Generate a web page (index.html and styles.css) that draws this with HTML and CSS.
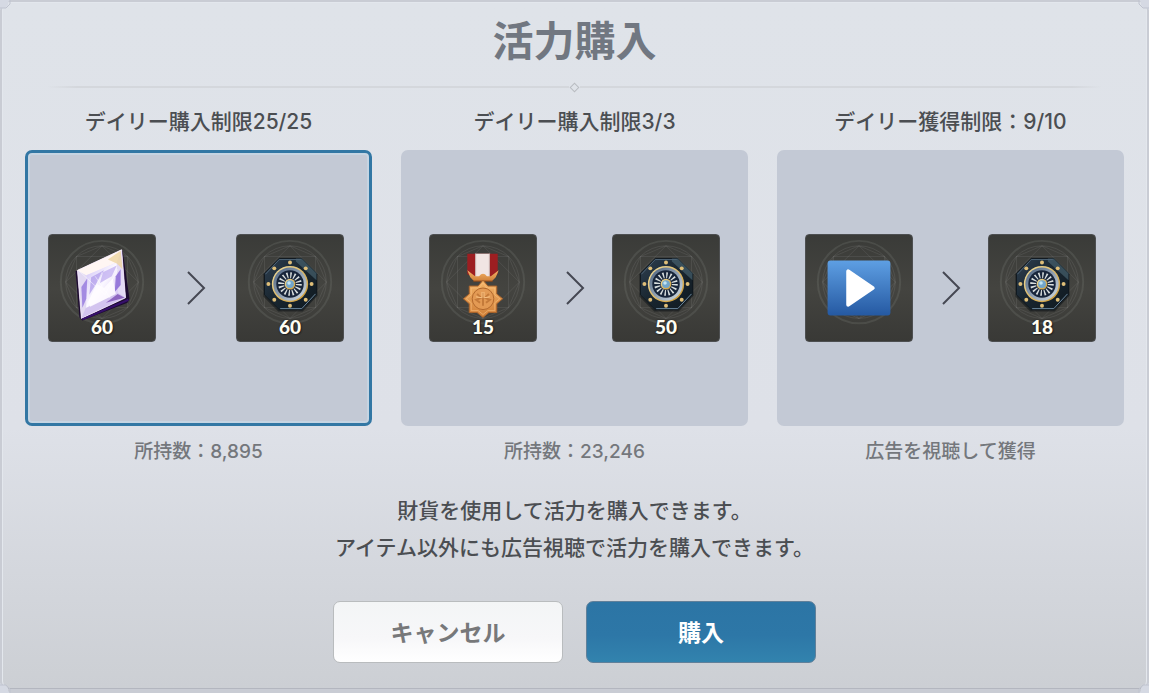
FILE: index.html
```html
<!doctype html>
<html lang="ja">
  <head>
    <meta charset="UTF-8" />
    <meta name="viewport" content="width=device-width, initial-scale=1" />
    <title>活力購入</title>
    <link rel="stylesheet" href="styles.css">
  </head>
  <body>
    <!-- shared drawings -->
    <svg class="sprite" width="0" height="0" aria-hidden="true">
      <defs>
        <linearGradient id="octagon-fill" x1="0" y1="0" x2="1" y2="1">
          <stop offset="0" stop-color="#2f4051" />
          <stop offset="0.45" stop-color="#1a2731" />
          <stop offset="1" stop-color="#0f1920" />
        </linearGradient>
        <linearGradient id="gold" x1="0" y1="0" x2="1" y2="1">
          <stop offset="0" stop-color="#f1dfa2" />
          <stop offset="1" stop-color="#c9952f" />
        </linearGradient>
        <linearGradient id="silver" x1="0" y1="0" x2="1" y2="1">
          <stop offset="0" stop-color="#4a607d" />
          <stop offset="1" stop-color="#d3dde5" />
        </linearGradient>
        <linearGradient id="gem-fill" x1="0" y1="0" x2="1" y2="1">
          <stop offset="0" stop-color="#fffafa" />
          <stop offset="0.5" stop-color="#e9defb" />
          <stop offset="1" stop-color="#b8a2e8" />
        </linearGradient>
        <linearGradient id="gem-face" x1="0" y1="0" x2="1" y2="1">
          <stop offset="0" stop-color="#cdbff6" />
          <stop offset="0.5" stop-color="#fbf8ff" />
          <stop offset="1" stop-color="#c7b4f0" />
        </linearGradient>
        <linearGradient id="bronze" x1="0" y1="0" x2="0" y2="1">
          <stop offset="0" stop-color="#f4b468" />
          <stop offset="1" stop-color="#cf7f38" />
        </linearGradient>
        <linearGradient id="play-fill" x1="0" y1="0" x2="0" y2="1">
          <stop offset="0" stop-color="#5e9fe3" />
          <stop offset="1" stop-color="#2559a2" />
        </linearGradient>
        <symbol id="emblem" viewBox="0 0 108 108">
          <g fill="none" stroke="#b4b8b4" stroke-opacity="0.13">
            <circle cx="54" cy="48" r="42" stroke-width="2" />
            <circle cx="54" cy="48" r="37" />
            <path d="M54 11 80 22 91 48 80 74 54 85 28 74 17 48 28 22Z" />
            <path d="M54 11 91 48 54 85 17 48ZM28 22H80V74H28Z" />
          </g>
        </symbol>
        <symbol id="energy" viewBox="0 0 108 108">
          <path d="M42 25H67L82 40V62L67 78H42L27 63V40Z" fill="#080d12" opacity="0.5" />
          <path d="M43 24H66L81 39V61L66 76H43L28 61V39Z" fill="url(#octagon-fill)" stroke="#101820" />
          <path d="M66 24 81 39V46L60 27V24Z" fill="#4f6a78" opacity="0.6" />
          <path d="M80 60 66 75H44" fill="none" stroke="#6d899f" />
          <path d="M29 40 43 25H65" fill="none" stroke="#4d6274" />
          <g fill="#dfbe78">
            <circle cx="54" cy="28" r="2" /><circle cx="70" cy="34" r="2" />
            <circle cx="76" cy="50" r="2" /><circle cx="70" cy="66" r="2" />
            <circle cx="54" cy="72" r="2" /><circle cx="38" cy="66" r="2" />
            <circle cx="32" cy="50" r="2" /><circle cx="38" cy="34" r="2" />
          </g>
          <circle cx="54" cy="50" r="18.5" fill="url(#gold)" />
          <circle cx="54" cy="50" r="17" fill="url(#silver)" />
          <circle cx="54" cy="50" r="14" fill="#18253a" />
          <circle cx="54" cy="50" r="9" fill="none" stroke="#d9dfdf" stroke-width="6" stroke-dasharray="1.4 2.13" />
          <circle cx="54" cy="50" r="5.5" fill="url(#gold)" />
          <circle cx="54" cy="50" r="4" fill="#72a6cc" />
          <circle cx="53" cy="49" r="1.8" fill="#c2e4f3" />
        </symbol>
        <symbol id="gem" viewBox="0 0 108 108">
          <path d="M27 37 31 36 75 16 82 65 80 69 34 87 31 84Z" fill="#1d0b31" />
          <path d="M29 36 74 15 78 64 33 85Z" fill="url(#gem-fill)" />
          <path d="M29 36 38 41 38 76 33 85Z" fill="#e2d9f2" />
          <path d="M29 36 74 15 69 28 38 41Z" fill="#fff6f3" />
          <path d="M74 15 78 64 70 59 69 28Z" fill="#e3daf5" />
          <path d="M33 85 38 73 70 59 78 64Z" fill="#d3c4ef" />
          <path d="M38 41 69 28 70 59 38 74Z" fill="url(#gem-face)" />
          <path d="M73 16 75 35 69 29 60 25Z" fill="#eed5a0" opacity="0.8" />
          <path d="M33 53 39 44 38 65 34 74Z" fill="#8d70dc" opacity="0.75" />
          <path d="M43 43 56 36 48 50 41 61Z" fill="#a28ae6" opacity="0.6" />
          <path d="M55 38 69 31 64 42 52 49Z" fill="#b39ded" opacity="0.6" />
          <path d="M68 42 73 35 73 51 67 58Z" fill="#7d5bd0" opacity="0.75" />
          <path d="M40 68 49 50 56 54 65 44 68 60 42 73Z" fill="#fffdff" opacity="0.85" />
          <path d="M58 69 70 60 77 64Z" fill="#7040ac" opacity="0.7" />
          <path d="M31 37 57 61 70 35M38 74 54 38M47 42 62 64" fill="none" stroke="#fff" stroke-opacity="0.5" />
          <path d="M29 36 74 15 78 64 33 85Z" fill="none" stroke="#f9edff" stroke-opacity="0.7" />
          <path d="M34 86 81 66" stroke="#37106c" stroke-width="2" />
        </symbol>
        <symbol id="medal" viewBox="0 0 108 108">
          <path d="M38 19H69V40L63 43H45L38 40Z" fill="#9d1e21" />
          <path d="M46 19H61V43H46Z" fill="#f1e5e3" />
          <path d="M46 19H47V43H46ZM60 19H61V43H60Z" fill="#c5aaa8" />
          <path d="M38 36 46 42H50Q54 37 58 42H62L70 36 67 43 63 47H45L41 43Z" fill="url(#bronze)" />
          <path d="M44 47H64" stroke="#8a4518" />
          <path d="M54 46 59 52H68V60L74 65 68 70V79H60L54 84 48 79H40V70L34 65 40 60V52H49Z" fill="url(#bronze)" stroke="#a8622b" />
          <path d="M54 49 58 54H66V61L71 65 66 69V77H59L54 81 49 77H42V69L37 65 42 61V54H50Z" fill="none" stroke="#ffc98a" stroke-opacity="0.5" />
          <circle cx="54" cy="65" r="11" fill="#e39a54" stroke="#b0672c" />
          <path d="M54 59V72M48 60 52 64 47 66 51 69M60 60 56 64 61 66 57 69" fill="none" stroke="#c47a3a" stroke-width="2" />
          <path d="M53 58V64L47 63M55 58V64L61 63" fill="none" stroke="#f9c486" />
        </symbol>
        <symbol id="play" viewBox="0 0 108 108">
          <rect x="22" y="26" width="64" height="56" rx="3" fill="url(#play-fill)" />
          <path d="M43 37V71L68 54Z" fill="#fff" stroke="#fff" stroke-width="4" stroke-linejoin="round" />
        </symbol>
        <symbol id="corner" viewBox="0 0 12 12">
          <path d="M0 0H10L8 2V5L5 8H2L0 10Z" fill="#d5d9e3" />
          <path d="M10 0V4L8 6 6 8H0" fill="none" stroke="#bfc3cf" />
        </symbol>
      </defs>
    </svg>

    <main class="dialog">
      <svg class="corner corner-tl" aria-hidden="true"><use href="#corner" /></svg>
      <svg class="corner corner-tr" aria-hidden="true"><use href="#corner" /></svg>
      <svg class="corner corner-bl" aria-hidden="true"><use href="#corner" /></svg>
      <svg class="corner corner-br" aria-hidden="true"><use href="#corner" /></svg>

      <form class="panel">
        <h1 class="title">活力購入</h1>
        <div class="divider"><span class="diamond"></span></div>

        <div class="offers">
          <label class="offer">
            <span class="offer-limit">デイリー購入制限25/25</span>
            <input class="offer-radio" type="radio" name="offer" value="gem" checked />
            <span class="offer-card">
              <span class="item">
                <svg class="item-art" aria-hidden="true"><use href="#emblem" /><use href="#gem" /></svg>
                <span class="item-count">60</span>
              </span>
              <svg class="arrow" viewBox="0 0 20 36" aria-hidden="true"><path d="M2 2 18 18 2 34" /></svg>
              <span class="item">
                <svg class="item-art" aria-hidden="true"><use href="#emblem" /><use href="#energy" /></svg>
                <span class="item-count">60</span>
              </span>
            </span>
            <span class="offer-note">所持数：8,895</span>
          </label>

          <label class="offer">
            <span class="offer-limit">デイリー購入制限3/3</span>
            <input class="offer-radio" type="radio" name="offer" value="medal" />
            <span class="offer-card">
              <span class="item">
                <svg class="item-art" aria-hidden="true"><use href="#emblem" /><use href="#medal" /></svg>
                <span class="item-count">15</span>
              </span>
              <svg class="arrow" viewBox="0 0 20 36" aria-hidden="true"><path d="M2 2 18 18 2 34" /></svg>
              <span class="item">
                <svg class="item-art" aria-hidden="true"><use href="#emblem" /><use href="#energy" /></svg>
                <span class="item-count">50</span>
              </span>
            </span>
            <span class="offer-note">所持数：23,246</span>
          </label>

          <label class="offer">
            <span class="offer-limit">デイリー獲得制限：9/10</span>
            <input class="offer-radio" type="radio" name="offer" value="ad" />
            <span class="offer-card">
              <span class="item">
                <svg class="item-art" aria-hidden="true"><use href="#emblem" /><use href="#play" /></svg>
              </span>
              <svg class="arrow" viewBox="0 0 20 36" aria-hidden="true"><path d="M2 2 18 18 2 34" /></svg>
              <span class="item">
                <svg class="item-art" aria-hidden="true"><use href="#emblem" /><use href="#energy" /></svg>
                <span class="item-count">18</span>
              </span>
            </span>
            <span class="offer-note">広告を視聴して獲得</span>
          </label>
        </div>

        <p class="description">財貨を使用して活力を購入できます。<br />アイテム以外にも広告視聴で活力を購入できます。</p>

        <div class="actions">
          <button class="button button-cancel" type="button">キャンセル</button>
          <button class="button button-buy" type="button">購入</button>
        </div>
      </form>
    </main>
  </body>
</html>
```

FILE: styles.css
```css
* {
  box-sizing: border-box;
  margin: 0;
  padding: 0;
}

body {
  background: #c9ccd4;
  font-family: Inter, "Noto Sans CJK JP", sans-serif;
  color: #4b4e52;
}

.sprite {
  position: absolute;
}

.dialog {
  position: relative;
  display: flex;
  min-height: 100vh;
  padding: 2px 2px 4px;
}

.corner {
  position: absolute;
  width: 12px;
  height: 12px;
}

.corner-tl {
  top: 0;
  left: 0;
}

.corner-tr {
  top: 0;
  right: 0;
  transform: scaleX(-1);
}

.corner-bl {
  bottom: 0;
  left: 0;
  transform: scaleY(-1);
}

.corner-br {
  right: 0;
  bottom: 0;
  transform: scale(-1);
}

.panel {
  flex: 1;
  padding: 8px 22px 24px;
  border: 1px solid #e3e7ed;
  border-bottom: 1px solid #b3b6bf;
  border-radius: 8px;
  background: linear-gradient(#dfe3e9, #dee1e8 62%, #d3d6dc 85%, #cccfd4);
}

.title {
  font-size: 41px;
  font-weight: 700;
  line-height: 60px;
  text-align: center;
  color: #717781;
}

/* line fading out at both ends, with a small diamond in the middle */
.divider {
  display: flex;
  align-items: center;
  gap: 2px;
  height: 12px;
  margin: 10px 22px 14px;
}

.divider::before,
.divider::after {
  content: "";
  flex: 1;
  height: 2px;
  background: linear-gradient(to right, transparent, #d4d7dc 30px);
}

.divider::after {
  background: linear-gradient(to left, transparent, #d4d7dc 30px);
}

.diamond {
  width: 7px;
  height: 7px;
  border: 1px solid #b9bcc1;
  transform: rotate(45deg);
}

.offers {
  display: grid;
  grid-template-columns: repeat(3, 1fr);
  gap: 29px;
}

.offer {
  position: relative;
  display: flex;
  flex-direction: column;
  text-align: center;
  cursor: pointer;
}

.offer-limit {
  margin-bottom: 13px;
  font-size: 21px;
  font-weight: 500;
  line-height: 30px;
}

.offer-radio {
  position: absolute;
  opacity: 0;
}

.offer-card {
  display: flex;
  align-items: center;
  justify-content: space-between;
  padding: 81px 25px;
  border: 3px solid #c3c9d5;
  border-radius: 7px;
  background: #c3c9d5;
}

.offer-radio:checked + .offer-card {
  padding-left: 20px;
  border-color: #3277a4;
  box-shadow: inset 0 0 0 2px #c5d4e2;
}

.offer-note {
  margin-top: 11px;
  font-size: 19px;
  font-weight: 500;
  line-height: 30px;
  color: #74777c;
}

.item {
  position: relative;
  width: 108px;
  height: 108px;
  border: 1px solid #4d4f51;
  border-radius: 4px;
  background: linear-gradient(#3a3b38, #444440 50%, #393936);
}

.item-art {
  display: block;
  width: 100%;
  height: 100%;
}

.item-count {
  position: absolute;
  right: 0;
  bottom: 3px;
  left: 0;
  font-family: Lato, sans-serif;
  font-size: 19px;
  font-weight: 900;
  line-height: 22px;
  color: #fffdf2;
  text-shadow: 0 0 2px #222, 1px 1px 1px #222;
}

.arrow {
  width: 20px;
  height: 36px;
  fill: none;
  stroke: #454752;
  stroke-width: 2;
}

.description {
  margin-top: 25px;
  font-size: 21px;
  font-weight: 500;
  line-height: 37px;
  text-align: center;
}

.actions {
  display: flex;
  justify-content: center;
  gap: 23px;
  margin-top: 35px;
}

.button {
  width: 230px;
  height: 62px;
  padding-bottom: 3px;
  border: 1px solid #b9bcbe;
  border-radius: 7px;
  font-family: inherit;
  font-size: 23px;
  font-weight: 700;
  cursor: pointer;
}

.button-cancel {
  background: linear-gradient(#f3f5f6, #f7f7f9 60%, #fff);
  color: #77787a;
}

.button-buy {
  border-color: #60809a;
  background: linear-gradient(#2c75a5, #2d77a7 55%, #3283ae);
  color: #fff;
}
```
